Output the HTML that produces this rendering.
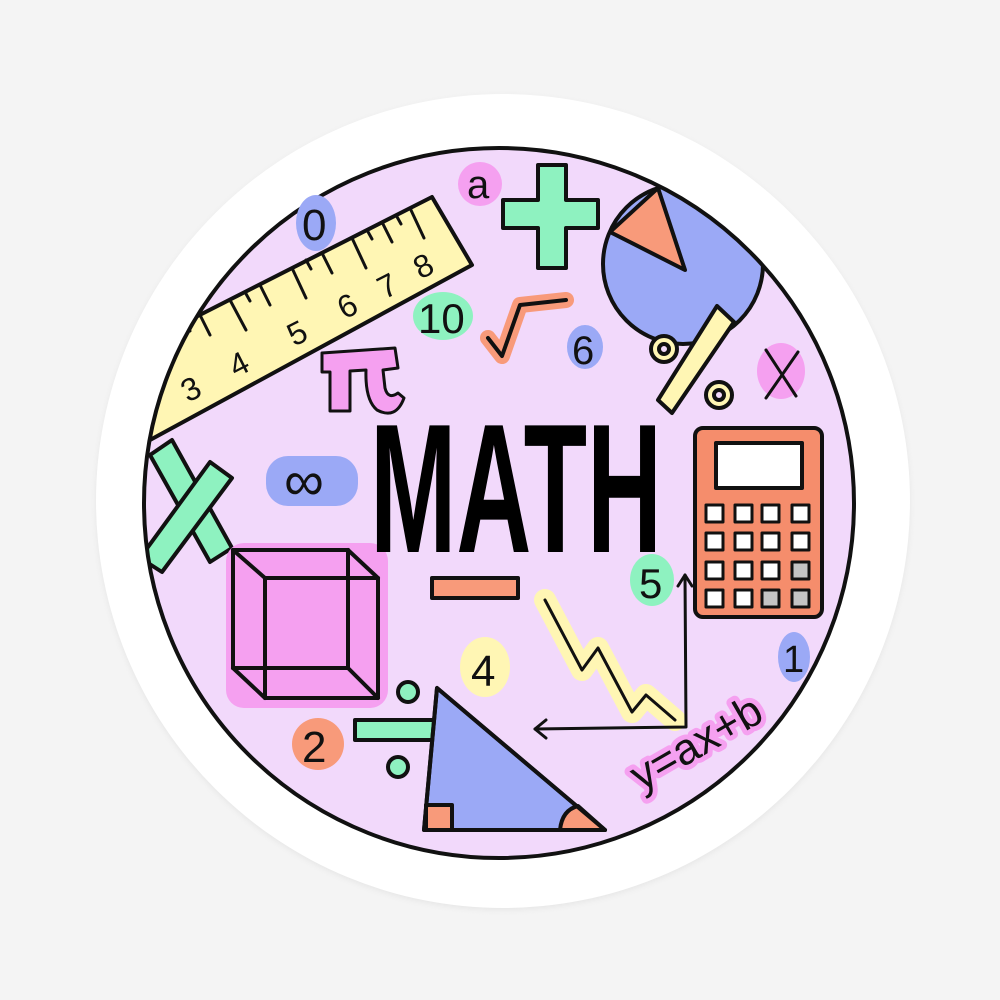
<!DOCTYPE html>
<html><head><meta charset="utf-8"><style>
html,body{margin:0;padding:0;background:#f4f4f4;}
svg{display:block}
text{font-family:"Liberation Sans",sans-serif;}
</style></head><body>
<svg width="1000" height="1000" viewBox="0 0 1000 1000" xmlns="http://www.w3.org/2000/svg">
<defs>
<clipPath id="c"><circle cx="499" cy="503" r="354"/></clipPath>
<filter id="sh" x="-10%" y="-10%" width="120%" height="120%"><feGaussianBlur stdDeviation="3"/></filter>
</defs>
<rect width="1000" height="1000" fill="#f4f4f4"/>
<circle cx="503" cy="503" r="407" fill="#e6e6e6" filter="url(#sh)"/>
<circle cx="503" cy="501" r="407" fill="#ffffff"/>
<circle cx="499" cy="503" r="355" fill="#f2d9fb"/>
<g clip-path="url(#c)" stroke="#111" stroke-width="4" stroke-linejoin="round" stroke-linecap="round">
  <polygon points="180,325 432,197 472,265 150,440 120,460 120,345" fill="#fff6b4"/>
  <g stroke-width="3">
    <line x1="200" y1="315" x2="210" y2="335"/><line x1="230" y1="300" x2="246" y2="330"/>
    <line x1="260" y1="285" x2="270" y2="305"/><line x1="292" y1="268" x2="306" y2="298"/>
    <line x1="322" y1="253" x2="332" y2="273"/><line x1="352" y1="238" x2="366" y2="268"/>
    <line x1="382" y1="222" x2="392" y2="242"/><line x1="410" y1="208" x2="424" y2="238"/>
    <line x1="185" y1="322" x2="190" y2="331"/><line x1="245" y1="292" x2="250" y2="301"/>
    <line x1="306" y1="260" x2="311" y2="269"/><line x1="367" y1="230" x2="372" y2="239"/>
    <line x1="396" y1="215" x2="401" y2="224"/>
  </g>
  <g stroke="none" fill="#111" font-size="32">
    <text x="180" y="400" transform="rotate(-27 190 385)">3</text>
    <text x="228" y="375" transform="rotate(-27 238 360)">4</text>
    <text x="286" y="343" transform="rotate(-27 298 328)">5</text>
    <text x="336" y="315" transform="rotate(-27 350 300)">6</text>
    <text x="376" y="295" transform="rotate(-27 390 280)">7</text>
    <text x="412" y="275" transform="rotate(-27 426 260)">8</text>
  </g>
  <circle cx="683" cy="264" r="80" fill="#9ba9f6"/>
  <polygon points="685,270 610,232 658,188" fill="#f89a7a"/>
  <g fill="#8ef2c0">
    <polygon points="150,455 172,440 232,548 210,562"/>
    <polygon points="210,462 232,478 162,572 140,558"/>
  </g>
</g>
<circle cx="499" cy="503" r="355" fill="none" stroke="#111" stroke-width="4"/>
<g stroke="#111" stroke-width="4" stroke-linejoin="round" stroke-linecap="round">
  <g stroke="none">
    <ellipse cx="316" cy="223" rx="20" ry="28" fill="#9ba9f6"/>
    <ellipse cx="480" cy="184" rx="22" ry="22" fill="#f5a0f0"/>
    <ellipse cx="443" cy="316" rx="30" ry="24" fill="#8ef2c0"/>
    <ellipse cx="585" cy="347" rx="18" ry="22" fill="#9ba9f6"/>
    <ellipse cx="781" cy="371" rx="24" ry="28" fill="#f5a0f0"/>
    <rect x="266" y="456" width="92" height="50" rx="22" fill="#9ba9f6"/>
    <ellipse cx="652" cy="580" rx="22" ry="26" fill="#8ef2c0"/>
    <ellipse cx="485" cy="667" rx="25" ry="30" fill="#fff6b4"/>
    <ellipse cx="794" cy="657" rx="16" ry="25" fill="#9ba9f6"/>
    <ellipse cx="318" cy="744" rx="26" ry="26" fill="#f89a7a"/>
    <rect x="226" y="543" width="162" height="165" rx="18" fill="#f5a0f0"/>
    <polyline points="545,600 582,670 598,648 632,712 646,695 675,720" fill="none" stroke="#fff6b4" stroke-width="22"/>
    <polyline points="488,338 502,356 520,305 566,300" fill="none" stroke="#f89a7a" stroke-width="16"/>
  </g>
  <polygon points="538,165 566,165 566,200 598,200 598,228 566,228 566,268 538,268 538,228 503,228 503,200 538,200" fill="#8ef2c0"/>
  <polygon points="717,306 734,322 672,413 658,400" fill="#fff6b4"/>
  <circle cx="664" cy="349" r="13" fill="#fff6b4"/><circle cx="664" cy="349" r="5" fill="#f2d9fb"/>
  <circle cx="719" cy="395" r="13" fill="#fff6b4"/><circle cx="719" cy="395" r="5" fill="#f2d9fb"/>
  <line x1="766" y1="350" x2="796" y2="396" stroke-width="3"/><line x1="798" y1="352" x2="766" y2="398" stroke-width="3"/>
  <polyline points="488,338 502,356 520,305 566,300" fill="none" stroke-width="4"/>
  <path d="M322 353 L395 348 L398 368 L383 370 L385 388 Q388 400 398 393 L404 398 Q396 420 377 410 Q365 400 366 370 L350 371 L350 411 L330 411 L330 372 L322 372 Z" fill="#f5a0f0" stroke-width="3"/>
  <rect x="233" y="550" width="115" height="118" fill="#f5a0f0"/>
  <rect x="265" y="578" width="113" height="120" fill="#f5a0f0"/>
  <rect x="233" y="550" width="115" height="118" fill="none"/>
  <line x1="233" y1="550" x2="265" y2="578"/><line x1="348" y1="550" x2="378" y2="578"/>
  <line x1="233" y1="668" x2="265" y2="698"/><line x1="348" y1="668" x2="378" y2="698"/>
  <rect x="432" y="578" width="86" height="20" fill="#f89a7a"/>
  <rect x="355" y="720" width="100" height="20" fill="#8ef2c0"/>
  <circle cx="408" cy="692" r="10" fill="#8ef2c0"/><circle cx="398" cy="767" r="10" fill="#8ef2c0"/>
  <polygon points="437,688 424,830 605,830" fill="#9ba9f6"/>
  <rect x="426" y="805" width="26" height="25" fill="#f89a7a"/>
  <path d="M560 830 Q562 810 578 806 L605 830 Z" fill="#f89a7a"/>
  <polygon points="437,688 424,830 605,830" fill="none"/>
  <polyline points="685,575 686,727 535,729" fill="none" stroke-width="3"/>
  <polyline points="678,586 685,575 692,586" fill="none" stroke-width="3"/>
  <polyline points="546,720 535,729 546,738" fill="none" stroke-width="3"/>
  <polyline points="545,600 582,670 598,648 632,712 646,695 675,720" fill="none" stroke-width="3"/>
  <rect x="695" y="428" width="127" height="189" rx="8" fill="#f58d6c"/>
  <rect x="716" y="443" width="86" height="45" fill="#fff"/>
  <g fill="#fff" stroke-width="3">
    <rect x="706" y="505" width="17" height="17"/><rect x="735" y="505" width="17" height="17"/><rect x="762" y="505" width="17" height="17"/><rect x="792" y="505" width="17" height="17"/>
    <rect x="706" y="533" width="17" height="17"/><rect x="735" y="533" width="17" height="17"/><rect x="762" y="533" width="17" height="17"/><rect x="792" y="533" width="17" height="17"/>
    <rect x="706" y="562" width="17" height="17"/><rect x="735" y="562" width="17" height="17"/><rect x="762" y="562" width="17" height="17"/><rect x="792" y="562" width="17" height="17" fill="#c4c4c4"/>
    <rect x="706" y="590" width="17" height="17"/><rect x="735" y="590" width="17" height="17"/><rect x="762" y="590" width="17" height="17" fill="#c4c4c4"/><rect x="792" y="590" width="17" height="17" fill="#c4c4c4"/>
  </g>
</g>
<g fill="#111" font-size="44">
  <text x="302" y="240">0</text>
  <text x="467" y="198" font-size="40">a</text>
  <text x="418" y="333" font-size="42">10</text>
  <text x="572" y="364" font-size="40">6</text>
  <text x="284" y="500" font-size="56">∞</text>
  <text x="639" y="598" font-size="42">5</text>
  <text x="471" y="686" font-size="44">4</text>
  <text x="783" y="672" font-size="38">1</text>
  <text x="302" y="762" font-size="44">2</text>
  <text x="640" y="792" font-size="44" fill="#111" transform="rotate(-30 640 790)" stroke="#f5a0f0" stroke-width="10" paint-order="stroke" stroke-linejoin="round">y=ax+b</text>
</g>
<text x="370" y="552" font-size="184" font-weight="bold" textLength="292" lengthAdjust="spacingAndGlyphs" fill="#000">MATH</text>
</svg>
</body></html>
